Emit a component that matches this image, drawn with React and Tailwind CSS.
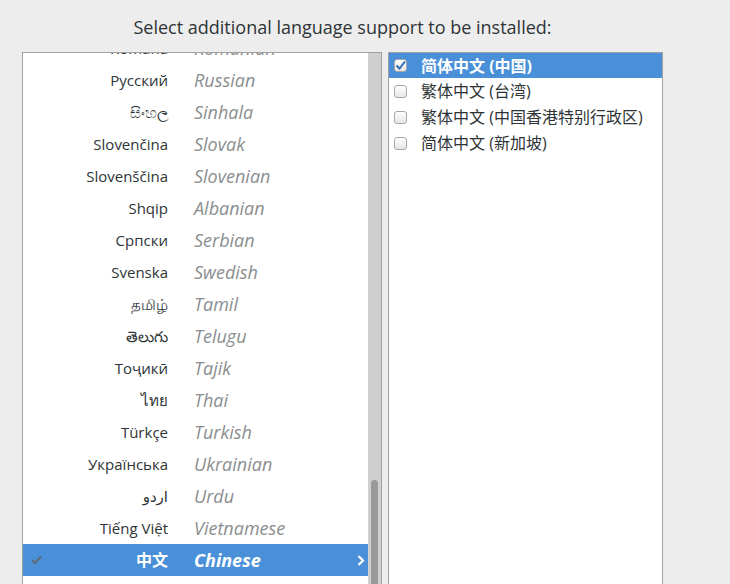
const languages = [
  ["Română", "Romanian"],
  ["Русский", "Russian"],
  ["සිංහල", "Sinhala"],
  ["Slovenčina", "Slovak"],
  ["Slovenščina", "Slovenian"],
  ["Shqip", "Albanian"],
  ["Српски", "Serbian"],
  ["Svenska", "Swedish"],
  ["தமிழ்", "Tamil"],
  ["తెలుగు", "Telugu"],
  ["Тоҷикӣ", "Tajik"],
  ["ไทย", "Thai"],
  ["Türkçe", "Turkish"],
  ["Українська", "Ukrainian"],
  ["اردو", "Urdu"],
  ["Tiếng Việt", "Vietnamese"],
  ["中文", "Chinese", true],
  ["", ""],
];

const locales = [
  ["简体中文 (中国)", true],
  ["繁体中文 (台湾)", false],
  ["繁体中文 (中国香港特别行政区)", false],
  ["简体中文 (新加坡)", false],
];

const Checkbox = ({ checked }) => (
  <div className="w-[13px] h-[13px] shrink-0 rounded-[3px] border border-[#a8a8a8] bg-gradient-to-b from-white to-[#e6e6e6] flex items-center justify-center">
    {checked && (
      <svg width="11" height="11" viewBox="0 0 11 11">
        <path d="M1.5 5.5 L4.5 8.5 L10 1.5" fill="none" stroke="#2f6db5" strokeWidth="2" />
      </svg>
    )}
  </div>
);

const LanguageRow = ({ native, english, selected }) => (
  <div
    className={`h-8 flex items-center relative ${selected ? "bg-[#4a90d9] text-white" : ""}`}
  >
    {selected && (
      <svg className="absolute left-[8px] top-[11px]" width="11" height="10" viewBox="0 0 11 10">
        <path d="M1 5 L4 8 L10 1.5" fill="none" stroke="#5e6a76" strokeWidth="2.2" />
      </svg>
    )}
    <div
      className={`w-[145px] text-right ${selected ? "font-bold text-[16px]" : "text-[15px] text-[#2e3436]"}`}
    >
      {native}
    </div>
    <div
      className={`ml-[26px] italic text-[18px] ${selected ? "font-bold" : "text-[#8b8e8f]"}`}
    >
      {english}
    </div>
    {selected && (
      <svg className="absolute right-[3px] top-[11px]" width="8" height="11" viewBox="0 0 8 11">
        <path d="M1.5 1 L6 5.5 L1.5 10" fill="none" stroke="white" strokeWidth="2.2" />
      </svg>
    )}
  </div>
);

export default function App() {
  return (
    <div
      className="h-[584px] w-[730px] overflow-hidden bg-[#ededed] text-[#2e3436]"
      style={{ fontFamily: '"Open Sans", "DejaVu Sans", "Noto Sans CJK SC", sans-serif' }}
    >
      <div className="ml-[22px] w-[641px] pt-[16px]">
        <div className="text-center text-[18px] leading-[22px] mb-[14px]">
          Select additional language support to be installed:
        </div>
        <div className="flex gap-[6px]">
          <div className="flex w-[360px] h-[540px] border-l border-t border-r border-[#a1a1a1] bg-white overflow-hidden">
            <div className="flex-1 overflow-hidden">
              <div className="-mt-[21px]">
                {languages.map(([n, e, s], i) => (
                  <LanguageRow key={i} native={n} english={e} selected={s} />
                ))}
              </div>
            </div>
            <div className="w-[13px] bg-[#cfcfcf] pt-[427px] pl-[3px]">
              <div className="w-[7px] h-[200px] rounded-full bg-[#999a9b]" />
            </div>
          </div>
          <div className="w-[275px] h-[540px] border-l border-t border-r border-[#a1a1a1] bg-white">
            {locales.map(([label, checked], i) => (
              <div
                key={i}
                className={`flex items-center pl-[5px] gap-[14px] text-[16px] ${
                  checked ? "h-[25px] bg-[#4a90d9] text-white font-bold" : "h-[26px] text-[#2e3436]"
                }`}
              >
                <Checkbox checked={checked} />
                <span>{label}</span>
              </div>
            ))}
          </div>
        </div>
      </div>
    </div>
  );
}
